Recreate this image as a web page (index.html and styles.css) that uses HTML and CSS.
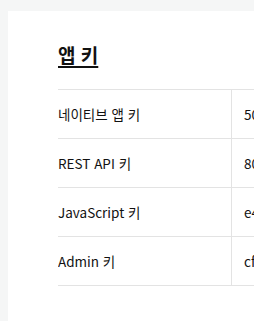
FILE: index.html
```html
<!DOCTYPE html>
<html lang="ko">
<head>
<meta charset="utf-8">
<title>앱 키</title>
<link rel="stylesheet" href="styles.css">
</head>
<body>
<main class="card">
  <h2 class="title">앱 키</h2>
  <table class="keys">
    <tr><th>네이티브 앱 키</th><td>50a1c3f7e9b2d4a6c8e0f1a2b3c4d5e6</td></tr>
    <tr><th>REST API 키</th><td>80b2d4f6a8c0e2a4c6e8f0b1d3f5a7c9</td></tr>
    <tr><th>JavaScript 키</th><td>e4c6a8b0d2f4e6a8c0b2d4f6e8a0c2b4</td></tr>
    <tr><th>Admin 키</th><td>cf1e3d5c7b9a0f2e4d6c8b0a1f3e5d7c</td></tr>
  </table>
</main>
</body>
</html>
```
FILE: styles.css
```css
html, body {
  margin: 0;
  padding: 0;
  background: #f5f6f6;
  font-family: "Noto Sans CJK KR", "Noto Sans", sans-serif;
  color: #111;
  overflow: hidden;
}

.card {
  margin: 11px 0 0 8px;
  background: #fff;
  padding: 30px 0 40px 50px;
  min-height: 300px;
}

.title {
  margin: 0 0 20px;
  font-size: 19px;
  font-weight: 700;
  line-height: 28px;
  text-decoration: underline;
  text-decoration-thickness: 2px;
  text-underline-offset: 3px;
}

.keys {
  border-collapse: collapse;
  width: 300px;
  table-layout: fixed;
  font-size: 13.5px;
}

.keys th,
.keys td {
  height: 48px;
  padding: 0;
  border-top: 1px solid #e3e3e3;
  border-bottom: 1px solid #e3e3e3;
  text-align: left;
  font-weight: 400;
  white-space: nowrap;
  overflow: hidden;
}

.keys th {
  width: 173px;
  border-right: 1px solid #e3e3e3;
}

.keys td {
  padding-left: 12px;
}
```
